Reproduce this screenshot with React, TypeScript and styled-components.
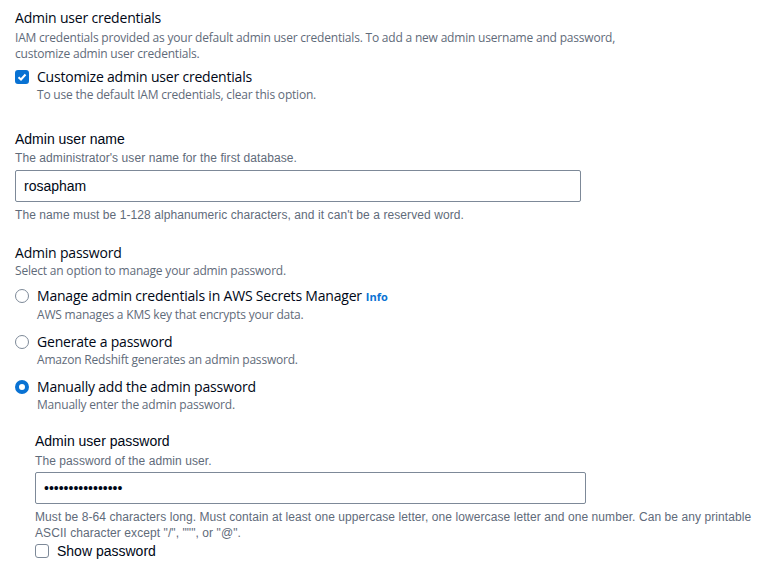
import React from 'react';
import styled, { createGlobalStyle } from 'styled-components';

const GlobalStyle = createGlobalStyle`
  body {
    margin: 0;
    background: #ffffff;
    color: #16191f;
    font-family: 'Open Sans', 'Liberation Sans', sans-serif;
  }
`;

const Page = styled.div`
  padding: 8px 15px 0 15px;
  display: flex;
  flex-direction: column;
`;

const Section = styled.section<{ $narrow?: boolean; $top?: number }>`
  display: flex;
  flex-direction: column;
  margin-top: ${(p) => p.$top ?? 0}px;
  font-family: ${(p) => (p.$narrow ? "'Liberation Sans', sans-serif" : "'Open Sans', sans-serif")};
  --ls-small: ${(p) => (p.$narrow ? '0.08px' : '-0.2px')};
  --ls-big: ${(p) => (p.$narrow ? '0px' : '-0.2px')};
`;

const Heading = styled.div`
  font-size: 14px;
  line-height: 20px;
  letter-spacing: var(--ls-big);
  color: #000716;
`;

const Desc = styled.div<{ $top?: number }>`
  font-size: 12px;
  line-height: 16px;
  letter-spacing: var(--ls-small);
  color: #5f6b7a;
  margin-top: ${(p) => p.$top ?? 0}px;
`;

const OptionRow = styled.div<{ $top?: number }>`
  display: grid;
  grid-template-columns: 14px 1fr;
  column-gap: 8px;
  margin-top: ${(p) => p.$top ?? 0}px;
`;

const Label = styled.div`
  font-size: 14px;
  line-height: 20px;
  letter-spacing: var(--ls-big);
  color: #000716;
`;

const Box = styled.span<{ $checked?: boolean }>`
  width: 14px;
  height: 14px;
  box-sizing: border-box;
  margin-top: 3px;
  border-radius: 3px;
  border: ${(p) => (p.$checked ? '2px solid #0972d3' : '1.5px solid #7d8998')};
  background: ${(p) => (p.$checked ? '#0972d3' : '#fff')};
  display: flex;
  align-items: center;
  justify-content: center;
`;

const Radio = styled.span<{ $checked?: boolean }>`
  width: 14px;
  height: 14px;
  box-sizing: border-box;
  margin-top: 3px;
  border-radius: 50%;
  border: ${(p) => (p.$checked ? '4px solid #0972d3' : '1.5px solid #7d8998')};
  background: #fff;
`;

const Info = styled.span`
  font-size: 11px;
  font-weight: 700;
  letter-spacing: 0;
  color: #0972d3;
  margin-left: 4px;
`;

const Input = styled.input<{ $width: number; $top: number }>`
  width: ${(p) => p.$width}px;
  height: 32px;
  box-sizing: border-box;
  margin-top: ${(p) => p.$top}px;
  border: 1px solid #7d8998;
  border-radius: 2px;
  padding: 0 8px;
  font-family: inherit;
  font-size: 14px;
  color: #000716;
  outline: none;
  background: #fff;
`;

const SubSection = styled.div`
  padding-left: 20px;
  display: flex;
  flex-direction: column;
  margin-top: 18px;
`;

const Check = () => (
  <svg width="10" height="10" viewBox="0 0 10 10">
    <path d="M1.5 5.2 L4 7.5 L8.5 2.5" fill="none" stroke="#fff" strokeWidth="2" />
  </svg>
);

export default function App() {
  return (
    <>
      <GlobalStyle />
      <Page>
        <Section>
          <Heading>Admin user credentials</Heading>
          <Desc $top={2}>
            IAM credentials provided as your default admin user credentials. To add a new admin username and password,
            <br />
            customize admin user credentials.
          </Desc>
          <OptionRow $top={5}>
            <Box $checked>
              <Check />
            </Box>
            <Label>Customize admin user credentials</Label>
            <span />
            <Desc>To use the default IAM credentials, clear this option.</Desc>
          </OptionRow>
        </Section>

        <Section $narrow $top={26}>
          <Heading>Admin user name</Heading>
          <Desc $top={1}>The administrator's user name for the first database.</Desc>
          <Input $width={566} $top={4} type="text" defaultValue="rosapham" readOnly />
          <Desc $top={5}>The name must be 1-128 alphanumeric characters, and it can't be a reserved word.</Desc>
        </Section>

        <Section $top={20}>
          <Heading>Admin password</Heading>
          <Desc>Select an option to manage your admin password.</Desc>
          <OptionRow $top={7}>
            <Radio />
            <Label>
              Manage admin credentials in AWS Secrets Manager<Info>Info</Info>
            </Label>
            <span />
            <Desc>AWS manages a KMS key that encrypts your data.</Desc>
          </OptionRow>
          <OptionRow $top={9}>
            <Radio />
            <Label>Generate a password</Label>
            <span />
            <Desc>Amazon Redshift generates an admin password.</Desc>
          </OptionRow>
          <OptionRow $top={9}>
            <Radio $checked />
            <Label>Manually add the admin password</Label>
            <span />
            <Desc>Manually enter the admin password.</Desc>
          </OptionRow>
        </Section>

        <Section $narrow>
          <SubSection>
            <Heading>Admin user password</Heading>
            <Desc $top={2}>The password of the admin user.</Desc>
            <Input $width={551} $top={3} type="password" defaultValue="rosapham12345678" readOnly />
            <Desc $top={5}>
              Must be 8-64 characters long. Must contain at least one uppercase letter, one lowercase letter and one number. Can be any printable
              <br />
              ASCII character except "/", """, or "@".
            </Desc>
            <OptionRow>
              <Box />
              <Label>Show password</Label>
            </OptionRow>
          </SubSection>
        </Section>
      </Page>
    </>
  );
}
